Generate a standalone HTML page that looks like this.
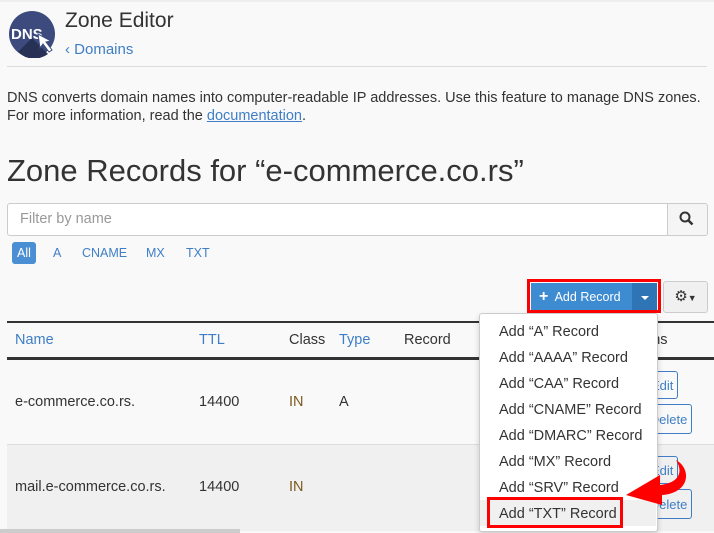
<!DOCTYPE html><html><head><style>
body{margin:0;width:714px;height:533px;overflow:hidden;background:#f9f9f9;font-family:"Liberation Sans",sans-serif;color:#333;position:relative}
.a{position:absolute;white-space:nowrap}
.lnk{color:#3f7ec6}
</style></head><body>
<div class="a" style="left:0;top:0;width:714px;height:2px;background:#eee"></div>
<svg class="a" style="left:8px;top:10px" width="48" height="48" viewBox="0 0 48 48">
<circle cx="24" cy="24" r="23" fill="#3c4a7e"/>
<path d="M24 28 L40 44 A23 23 0 0 1 10 42 Z" fill="#273155"/>
<text x="3" y="29" font-family="Liberation Sans" font-weight="bold" font-size="15" fill="#fff">DNS</text>
<path d="M30 24 L32 38 L35 34 L41 42 L44 40 L38 32 L43 31 Z" fill="#fff" stroke="#3c4a7e" stroke-width="1"/>
</svg>
<div class="a" style="left:65px;top:9px;font-size:21px;color:#333">Zone Editor</div>
<div class="a lnk" style="left:65px;top:41px;font-size:15px">&#8249; Domains</div>
<div class="a" style="left:7px;top:66px;width:700px;height:1px;background:#ddd"></div>
<div class="a" style="left:7px;top:89px;font-size:14.5px;line-height:18px">DNS converts domain names into computer-readable IP addresses. Use this feature to manage DNS zones.<br>For more information, read the <span class="lnk" style="text-decoration:underline">documentation</span>.</div>
<div class="a" style="left:7px;top:153px;font-size:31px">Zone Records for “e-commerce.co.rs”</div>
<div class="a" style="left:7px;top:203px;width:698px;height:31px;border:1px solid #ccc;border-radius:3px;background:#fff"></div>
<div class="a" style="left:20px;top:211px;font-size:14.5px;color:#999">Filter by name</div>
<div class="a" style="left:667px;top:203px;width:39px;height:31px;border:1px solid #ccc;border-radius:0 3px 3px 0;background:#f5f5f5"></div>
<svg class="a" style="left:679px;top:211px" width="15" height="15"><circle cx="6" cy="6" r="4.5" stroke="#333" stroke-width="2" fill="none"/><path d="M9.5 9.5 L13.5 13.5" stroke="#333" stroke-width="2.5"/></svg>
<div class="a" style="left:12px;top:242px;width:24px;height:22px;background:#4a8fd3;border-radius:3px;color:#fff;font-size:12.5px;line-height:22px;text-align:center">All</div>
<div class="a lnk" style="left:53px;top:246px;font-size:12.5px">A</div>
<div class="a lnk" style="left:82px;top:246px;font-size:12.5px">CNAME</div>
<div class="a lnk" style="left:146px;top:246px;font-size:12.5px">MX</div>
<div class="a lnk" style="left:186px;top:246px;font-size:12.5px">TXT</div>
<div class="a" style="left:7px;top:321px;width:707px;height:2px;background:#333"></div>
<div class="a lnk" style="left:15px;top:332px;font-size:14.5px">Name</div>
<div class="a lnk" style="left:199px;top:332px;font-size:14.5px">TTL</div>
<div class="a" style="left:289px;top:332px;font-size:14.5px">Class</div>
<div class="a lnk" style="left:339px;top:332px;font-size:14.5px">Type</div>
<div class="a" style="left:404px;top:332px;font-size:14.5px">Record</div>
<div class="a" style="left:620px;top:332px;font-size:14.5px">Actions</div>
<div class="a" style="left:7px;top:357px;width:707px;height:3px;background:#333"></div>
<div class="a" style="left:7px;top:444px;width:707px;height:86px;background:#f0f0f0;border-top:1px solid #ddd"></div>
<div class="a" style="left:15px;top:394px;font-size:14.5px">e-commerce.co.rs.</div>
<div class="a" style="left:199px;top:394px;font-size:14.5px">14400</div>
<div class="a" style="left:289px;top:394px;font-size:14.5px;color:#7a5a1e">IN</div>
<div class="a" style="left:339px;top:394px;font-size:14.5px">A</div>
<div class="a" style="left:15px;top:479px;font-size:14.5px">mail.e-commerce.co.rs.</div>
<div class="a" style="left:199px;top:479px;font-size:14.5px">14400</div>
<div class="a" style="left:289px;top:479px;font-size:14.5px;color:#7a5a1e">IN</div>
<div class="a lnk" style="left:630px;top:371px;height:28px;border:1px solid #3f7ec6;border-radius:3px;font-size:13px;line-height:28px;text-align:right;box-sizing:border-box;width:48px">Edit&nbsp;</div>
<div class="a lnk" style="left:630px;top:404px;width:62px;height:30px;border:1px solid #3f7ec6;border-radius:3px;font-size:13px;line-height:30px;text-align:right;box-sizing:border-box">Delete&nbsp;</div>
<div class="a lnk" style="left:630px;top:456px;width:48px;height:28px;border:1px solid #3f7ec6;border-radius:3px;font-size:13px;line-height:28px;text-align:right;box-sizing:border-box">Edit&nbsp;</div>
<div class="a lnk" style="left:630px;top:489px;width:62px;height:30px;border:1px solid #3f7ec6;border-radius:3px;font-size:13px;line-height:30px;text-align:right;box-sizing:border-box">Delete&nbsp;</div>
<div class="a" style="left:0;top:529px;width:240px;height:4px;background:#ccc"></div>
<div class="a" style="left:527px;top:279px;width:134px;height:34px;box-sizing:border-box;border:3px solid #f00"></div>
<div class="a" style="left:531px;top:283px;width:101px;height:27px;background:#3d8bd1;color:#fff;font-size:12.5px;line-height:27px"><span style="font-weight:bold;font-size:16px;margin-left:8px">+</span>&nbsp; Add Record</div>
<div class="a" style="left:632px;top:283px;width:25px;height:27px;background:#2f75b5"></div>
<div class="a" style="left:641px;top:296px;border:4px solid transparent;border-top:4px solid #fff"></div>
<div class="a" style="left:663px;top:281px;width:43px;height:30px;border:1px solid #ccc;border-radius:3px;background:#f0f0f0;font-size:15px;line-height:30px;text-align:center">⚙<span style="font-size:9px">▼</span></div>
<div class="a" style="left:479px;top:313px;width:177px;height:217px;background:#fff;border:1px solid #ccc;border-radius:3px;box-shadow:0 3px 6px rgba(0,0,0,.18)"></div>
<div class="a" style="left:480px;top:500px;width:176px;height:26px;background:#f0f0f0"></div>
<div class="a" style="left:499px;top:319px;font-size:14.5px;line-height:26px">Add “A” Record<br>Add “AAAA” Record<br>Add “CAA” Record<br>Add “CNAME” Record<br>Add “DMARC” Record<br>Add “MX” Record<br>Add “SRV” Record<br>Add “TXT” Record</div>
<div class="a" style="left:487px;top:497px;width:136px;height:31px;box-sizing:border-box;border:3px solid #f00"></div>
<svg class="a" style="left:620px;top:455px" width="75" height="60" viewBox="0 0 75 60">
<path d="M56 5 C72 14 70 38 42 40 L42 50 L6 40 L40 20 L40 30 C58 28 64 18 56 5 Z" fill="#f00"/>
</svg>
</body></html>
